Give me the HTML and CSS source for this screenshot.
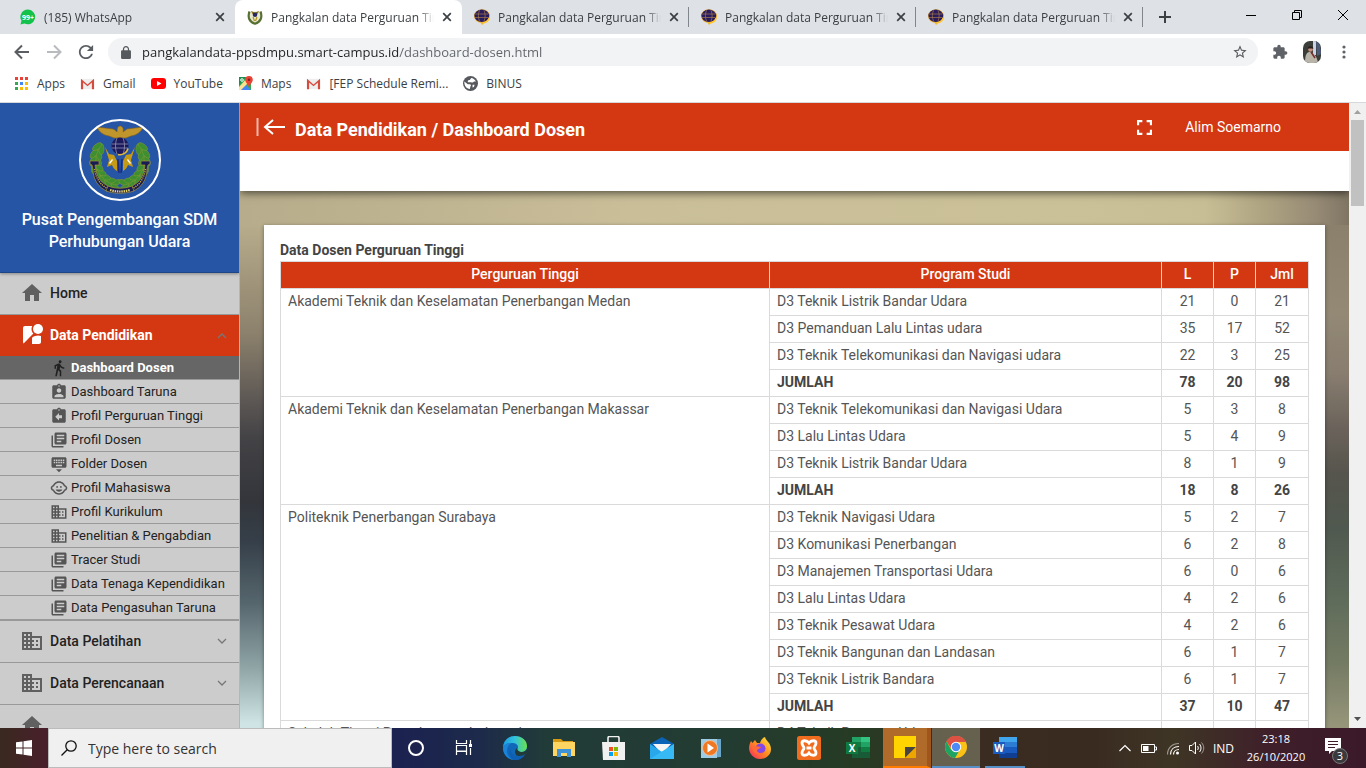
FILE: index.html
```html
<!DOCTYPE html>
<html lang="id">
<head>
<meta charset="utf-8">
<title>Pangkalan data Perguruan Tinggi</title>
<link rel="stylesheet" href="styles.css">
</head>
<body>
<svg class="defs" aria-hidden="true">
  <symbol id="home" viewBox="0 0 24 24"><path d="M10 20v-6h4v6h5v-8h3L12 3 2 12h3v8z"/></symbol>
  <symbol id="street" viewBox="0 0 24 24"><path d="M12.56 14.33c-.34.27-.56.7-.56 1.17V21h7c1.1 0 2-.9 2-2v-5.98c-.94-.33-1.95-.52-3-.52-2.03 0-3.93.7-5.44 1.83z"/><circle cx="18" cy="6" r="5"/><path d="M11.5 6c0-1.08.27-2.1.74-3H5c-1.1 0-2 .9-2 2v14c0 .55.23 1.05.59 1.41l9.82-9.82C12.23 9.42 11.5 7.8 11.5 6z"/></symbol>
  <symbol id="walk" viewBox="0 0 24 24"><path d="M13.5 5.5c1.1 0 2-.9 2-2s-.9-2-2-2-2 .9-2 2 .9 2 2 2zM9.8 8.9L7 23h2.1l1.8-8 2.1 2v6h2v-7.5l-2.1-2 .6-3C14.8 12 16.8 13 19 13v-2c-1.9 0-3.5-1-4.3-2.4l-1-1.6c-.4-.6-1-1-1.7-1-.3 0-.5.1-.8.1L6 8.3V13h2V9.6l1.8-.7"/></symbol>
  <symbol id="badge-user" viewBox="0 0 24 24"><path d="M19 3h-4.18C14.4 1.84 13.3 1 12 1c-1.3 0-2.4.84-2.82 2H5c-1.1 0-2 .9-2 2v14c0 1.1.9 2 2 2h14c1.1 0 2-.9 2-2V5c0-1.1-.9-2-2-2zm-7 0c.55 0 1 .45 1 1s-.45 1-1 1-1-.45-1-1 .45-1 1-1zm0 4c1.66 0 3 1.34 3 3s-1.34 3-3 3-3-1.34-3-3 1.34-3 3-3zm6 12H6v-1.4c0-2 4-3.1 6-3.1s6 1.1 6 3.1V19z"/></symbol>
  <symbol id="badge-return" viewBox="0 0 24 24"><path d="M19 3h-4.18C14.4 1.84 13.3 1 12 1c-1.3 0-2.4.84-2.82 2H5c-1.1 0-2 .9-2 2v14c0 1.1.9 2 2 2h14c1.1 0 2-.9 2-2V5c0-1.1-.9-2-2-2zm-7 0c.55 0 1 .45 1 1s-.45 1-1 1-1-.45-1-1 .45-1 1-1zm4 12h-4v3l-5-5 5-5v3h4v4z"/></symbol>
  <symbol id="books" viewBox="0 0 24 24"><path d="M4 6H2v14c0 1.1.9 2 2 2h14v-2H4V6zm16-4H8c-1.1 0-2 .9-2 2v12c0 1.1.9 2 2 2h12c1.1 0 2-.9 2-2V4c0-1.1-.9-2-2-2zm-1 9H9V9h10v2zm-4 4H9v-2h6v2zm4-8H9V5h10v2z"/></symbol>
  <symbol id="keyboard" viewBox="0 0 24 24"><path d="M20 3H4c-1.1 0-1.99.9-1.99 2L2 15c0 1.1.9 2 2 2h16c1.1 0 2-.9 2-2V5c0-1.1-.9-2-2-2zm-9 3h2v2h-2V6zm0 3h2v2h-2V9zM8 6h2v2H8V6zm0 3h2v2H8V9zm-1 2H5V9h2v2zm0-3H5V6h2v2zm9 7H8v-2h8v2zm0-4h-2V9h2v2zm0-3h-2V6h2v2zm3 3h-2V9h2v2zm0-3h-2V6h2v2zm-7 15l4-4H8l4 4z"/></symbol>
  <symbol id="child" viewBox="0 0 24 24"><circle cx="14.5" cy="10.5" r="1.25"/><circle cx="9.5" cy="10.5" r="1.25"/><path d="M22.94 12.66c.04-.21.06-.43.06-.66s-.02-.45-.06-.66c-.25-1.51-1.36-2.74-2.81-3.17-.53-1.12-1.28-2.1-2.19-2.91C16.36 3.85 14.28 3 12 3s-4.36.85-5.94 2.26c-.92.81-1.67 1.8-2.19 2.91-1.45.43-2.56 1.65-2.81 3.17-.04.21-.06.43-.06.66s.02.45.06.66c.25 1.51 1.36 2.74 2.81 3.17.52 1.11 1.27 2.09 2.17 2.89C7.62 20.14 9.71 21 12 21s4.38-.86 5.97-2.28c.9-.8 1.65-1.79 2.17-2.89 1.44-.43 2.55-1.65 2.8-3.17zM19 14c-.1 0-.19-.02-.29-.03-.2.67-.49 1.29-.86 1.86C16.6 17.74 14.45 19 12 19s-4.6-1.26-5.85-3.17c-.37-.57-.66-1.19-.86-1.86-.1.01-.19.03-.29.03-1.1 0-2-.9-2-2s.9-2 2-2c.1 0 .19.02.29.03.2-.67.49-1.29.86-1.86C7.4 6.26 9.55 5 12 5s4.6 1.26 5.85 3.17c.37.57.66 1.19.86 1.86.1-.01.19-.03.29-.03 1.1 0 2 .9 2 2s-.9 2-2 2zM7.5 14c.76 1.77 2.49 3 4.5 3s3.74-1.23 4.5-3h-9z"/></symbol>
  <symbol id="domain" viewBox="0 0 24 24"><path d="M12 7V3H2v18h20V7H12zM6 19H4v-2h2v2zm0-4H4v-2h2v2zm0-4H4V9h2v2zm0-4H4V5h2v2zm4 12H8v-2h2v2zm0-4H8v-2h2v2zm0-4H8V9h2v2zm0-4H8V5h2v2zm10 12h-8v-2h2v-2h-2v-2h2v-2h-2V9h8v10zm-2-8h-2v2h2v-2zm0 4h-2v2h2v-2z"/></symbol>
  <symbol id="chev-down" viewBox="0 0 10 10"><path d="M1 3l4 4 4-4" fill="none" stroke="currentColor" stroke-width="1.3"/></symbol>
  <symbol id="chev-up" viewBox="0 0 10 10"><path d="M1 8l4-4 4 4" fill="none" stroke="currentColor" stroke-width="1.3"/></symbol>
  <symbol id="close" viewBox="0 0 10 10"><path d="M1.2 1.2l7.6 7.6M8.8 1.2L1.2 8.8" fill="none" stroke="currentColor" stroke-width="1.7"/></symbol>
  <symbol id="globe-fav" viewBox="0 0 16 16"><path d="M0 7C0 3 4 .2 8 .2S16 3 16 7c0 3.500-3 6-5.500 6.500L8 16 6.500 13.800C3 13.500 0 10.500 0 7z" fill="#f2b632"/><ellipse cx="7.800" cy="6.800" rx="7.400" ry="6.200" fill="#2a1c5c"/><path d="M1 5h13.500M1 8.500h13.500M5.500 1.200c-1.500 4-1.500 7 0 11M10 1.200c1.500 4 1.500 7 0 11" fill="none" stroke="#a37a4a" stroke-width=".7"/><path d="M9 14c3-.5 5.500-2.500 6.200-5" fill="none" stroke="#ffc629" stroke-width="1.400"/></symbol>
  <symbol id="gmail" viewBox="0 0 16 16"><path d="M1 3h14v11H1z" fill="#eee"/><path d="M1 14V3l7 6 7-6v11h-2.300V7L8 11 3.300 7v7z" fill="#d54b3d"/></symbol>
</svg>

<header class="browser">
  <div class="tabstrip">
    <div class="tab">
      <svg class="fav" viewBox="0 0 16 16"><path d="M8 .5a7.400 7.400 0 1 1-3.600 14L.5 15.500l1-3.800A7.400 7.400 0 0 1 8 .5z" fill="#12c24b"/><text x="8" y="11" text-anchor="middle" class="fav-count">99+</text></svg>
      <span class="tab-title">(185) WhatsApp</span>
      <button class="tab-close" aria-label="Tutup tab"><svg><use href="#close"/></svg></button>
    </div>
    <div class="tab active">
      <svg class="fav" viewBox="0 0 16 16"><path d="M2.500 2.500C.5 8 2 13 8 14.800 14 13 15.500 8 13.500 2.500" fill="#e7e6cf" stroke="#567033" stroke-width="2.200"/><path d="M4 2l4 1.500L12 2l-1.500 3h-5z" fill="#8d6f1f"/><circle cx="8" cy="5.800" r="2.300" fill="#26295c"/><path d="M6 8l1.500 4M10 8l-1.500 4" stroke="#b3921e" stroke-width="1.200"/></svg>
      <span class="tab-title">Pangkalan data Perguruan Tinggi</span>
      <button class="tab-close" aria-label="Tutup tab"><svg><use href="#close"/></svg></button>
    </div>
    <div class="tab divided">
      <svg class="fav"><use href="#globe-fav"/></svg>
      <span class="tab-title">Pangkalan data Perguruan Tinggi</span>
      <button class="tab-close" aria-label="Tutup tab"><svg><use href="#close"/></svg></button>
    </div>
    <div class="tab divided">
      <svg class="fav"><use href="#globe-fav"/></svg>
      <span class="tab-title">Pangkalan data Perguruan Tinggi</span>
      <button class="tab-close" aria-label="Tutup tab"><svg><use href="#close"/></svg></button>
    </div>
    <div class="tab divided">
      <svg class="fav"><use href="#globe-fav"/></svg>
      <span class="tab-title">Pangkalan data Perguruan Tinggi</span>
      <button class="tab-close" aria-label="Tutup tab"><svg><use href="#close"/></svg></button>
    </div>
    <button class="new-tab" aria-label="Tab baru"><svg viewBox="0 0 12 12"><path d="M6 0v12M0 6h12" stroke="#3c4043" stroke-width="2"/></svg></button>
    <div class="win-buttons">
      <button aria-label="Minimize"><svg viewBox="0 0 10 10"><path d="M0 5.500h10" stroke="#000"/></svg></button>
      <button aria-label="Restore"><svg viewBox="0 0 10 10"><path d="M.5 2.500h7v7h-7zM2.500 2.500v-2h7v7h-2" fill="none" stroke="#000"/></svg></button>
      <button aria-label="Close"><svg viewBox="0 0 10 10"><path d="M0 0l10 10M10 0L0 10" stroke="#000"/></svg></button>
    </div>
  </div>

  <div class="toolbar">
    <div class="nav-buttons">
      <button aria-label="Kembali"><svg viewBox="0 0 16 16"><path d="M15 8H2M8 1.500L1.500 8 8 14.500" fill="none" stroke="#5a5d61" stroke-width="2"/></svg></button>
      <button aria-label="Maju"><svg viewBox="0 0 16 16"><path d="M1 8h13M8 1.500L14.500 8 8 14.500" fill="none" stroke="#b9bbbe" stroke-width="2"/></svg></button>
      <button aria-label="Muat ulang"><svg class="reload" viewBox="3 3 18 18"><path d="M17.650 6.350C16.200 4.900 14.210 4 12 4c-4.420 0-7.990 3.580-7.990 8s3.570 8 7.990 8c3.730 0 6.840-2.550 7.730-6h-2.080c-.82 2.330-3.040 4-5.650 4-3.310 0-6-2.690-6-6s2.690-6 6-6c1.660 0 3.140.69 4.220 1.780L13 11h7V4l-2.350 2.350z" fill="#5a5d61"/></svg></button>
    </div>
    <div class="omnibox">
      <svg class="lock" viewBox="4 1 16 21"><path d="M18 8h-1V6c0-2.760-2.240-5-5-5S7 3.240 7 6v2H6c-1.100 0-2 .9-2 2v10c0 1.100.9 2 2 2h12c1.100 0 2-.9 2-2V10c0-1.100-.9-2-2-2zM9 8V6c0-1.660 1.340-3 3-3s3 1.340 3 3v2H9z" fill="#55585c"/></svg>
      <input type="text" aria-label="Alamat" value="pangkalandata-ppsdmpu.smart-campus.id/dashboard-dosen.html">
      <button aria-label="Tandai halaman"><svg viewBox="0 0 24 24"><path d="M22 9.240l-7.190-.62L12 2 9.190 8.630 2 9.240l5.460 4.730L5.820 21 12 17.270 18.180 21l-1.630-7.030L22 9.240zM12 15.400l-3.760 2.270 1-4.280-3.320-2.880 4.380-.38L12 6.100l1.710 4.040 4.380.38-3.320 2.880 1 4.280L12 15.400z" fill="#55585c"/></svg></button>
    </div>
    <div class="tools">
      <button aria-label="Ekstensi"><svg viewBox="0 0 24 24"><path d="M20.500 11H19V7c0-1.100-.9-2-2-2h-4V3.500C13 2.120 11.880 1 10.500 1S8 2.120 8 3.500V5H4c-1.100 0-1.990.9-1.990 2v3.800H3.500c1.490 0 2.700 1.210 2.700 2.700s-1.210 2.700-2.700 2.700H2V20c0 1.100.9 2 2 2h3.800v-1.500c0-1.490 1.210-2.700 2.700-2.700 1.490 0 2.700 1.210 2.700 2.700V22H17c1.100 0 2-.9 2-2v-4h1.500c1.380 0 2.500-1.120 2.500-2.500S21.880 11 20.500 11z" fill="#5f6368"/></svg></button>
      <button aria-label="Profil"><svg class="avatar" viewBox="0 0 18 22"><defs><clipPath id="round"><rect width="18" height="22" rx="7"/></clipPath></defs><g clip-path="url(#round)"><rect width="18" height="22" fill="#3a3d38"/><path d="M10 0h3v14h-3z" fill="#c9d3e6"/><path d="M13 0c4 1 5 8 5 13l-4 2z" fill="#4d5a78"/><path d="M2 22c0-9 2-11 5-11s7 4 8 11z" fill="#b9b4a8"/><circle cx="7.500" cy="8.500" r="2.300" fill="#c98f7d"/><path d="M4.500 7.500c1-3 5-3 6 0z" fill="#2a1d1b"/><path d="M8 11l4 6" stroke="#7a2d2d" stroke-width="1.500"/></g></svg></button>
      <button aria-label="Menu"><svg viewBox="0 0 16 16"><g fill="#5f6368"><circle cx="8" cy="3" r="1.600"/><circle cx="8" cy="8" r="1.600"/><circle cx="8" cy="13" r="1.600"/></g></svg></button>
    </div>
  </div>

  <nav class="bookmarks" aria-label="Bookmark">
    <a href="#"><svg viewBox="0 0 15 15"><path d="M1 1h3v3H1zM6 1h3v3H6zM11 1h3v3h-3z" fill="#ea4335"/><path d="M1 6h3v3H1z" fill="#34a853"/><path d="M6 6h3v3H6z" fill="#4285f4"/><path d="M11 6h3v3h-3zM6 11h3v3H6zM11 11h3v3h-3z" fill="#fbbc05"/><path d="M1 11h3v3H1z" fill="#34a853"/></svg>Apps</a>
    <a href="#"><svg><use href="#gmail"/></svg>Gmail</a>
    <a href="#"><svg viewBox="0 0 15 15"><rect y="2" width="15" height="11" rx="3" fill="#f00"/><path d="M6 5l4.500 2.500L6 10z" fill="#fff"/></svg>YouTube</a>
    <a href="#"><svg viewBox="0 0 15 15"><path d="M1 1h9l3 5v8H1z" fill="#34a853"/><path d="M1 14l6-6 6 6z" fill="#4285f4"/><path d="M1 11l8-9 3 3-9 9H1z" fill="#fde293"/><path d="M1 1h7L1 9z" fill="#1e8e4e"/><circle cx="4" cy="4" r="1.300" fill="none" stroke="#fff"/><path d="M11 0a3.800 3.800 0 0 1 3.800 3.800C14.800 6.500 12 8 11 11 10 8 7.200 6.500 7.200 3.800A3.800 3.800 0 0 1 11 0z" fill="#ea4335"/><circle cx="11" cy="3.800" r="1.300" fill="#8c1d18"/></svg>Maps</a>
    <a href="#"><svg><use href="#gmail"/></svg>[FEP Schedule Remi...</a>
    <a href="#"><svg viewBox="1 1 22 22"><circle cx="12" cy="12" r="11" fill="#55585c"/><path d="M3 9l5 4h3c2 0 2 2 1 3l-1 4C6 20 3 15 3 11zM8 9c0-2 2-2 3-2l2-3c3 0 5 2 7 5h-3c-1 2-3 2-4 1H8zM15 14h3l-1 3-2 1z" fill="#fff"/></svg>BINUS</a>
  </nav>
</header>

<div class="viewport">
  <aside class="sidebar">
    <div class="brand">
      <svg class="emblem" viewBox="0 0 82 82">
        <defs>
          <g id="leaf"><ellipse cx="40" cy="64" rx="2.600" ry="5.500" transform="rotate(62 40 64)"/><ellipse cx="40" cy="69" rx="2.600" ry="5.500" transform="rotate(112 40 69)"/></g>
          <g id="branch" fill="#3d8f2f" stroke="#8f9a35" stroke-width=".5">
            <use href="#leaf" transform="rotate(8 41 42)"/><use href="#leaf" transform="rotate(24 41 42)"/><use href="#leaf" transform="rotate(40 41 42)"/><use href="#leaf" transform="rotate(56 41 42)"/><use href="#leaf" transform="rotate(72 41 42)"/><use href="#leaf" transform="rotate(88 41 42)"/><use href="#leaf" transform="rotate(104 41 42)"/><use href="#leaf" transform="rotate(120 41 42)"/>
          </g>
          <g id="ribbon"><path d="M11 42h9v4h-4l1 6c2 8 6 12 12 15l-1 5C20 69 14 61 14 50l-1-4-2-1z" fill="#191b54" stroke="#a89439" stroke-width=".7"/><path d="M15.500 50c1 8 5 15 12 19" fill="none" stroke="#c4ab38" stroke-width="1.400" stroke-dasharray="1.200 1"/></g>
          <path id="torch" d="M26 28l4 7 5 1 3 6v10c-2-1-4-3-5-6l-5 2 2-7z" fill="#c49a17"/>
        </defs>
        <use href="#branch"/><use href="#branch" transform="matrix(-1 0 0 1 82 0)"/>
        <use href="#ribbon"/><use href="#ribbon" transform="matrix(-1 0 0 1 82 0)"/>
        <use href="#torch"/><use href="#torch" transform="matrix(-1 0 0 1 82 0)"/>
        <path d="M30 44l3-4 1 1-3 4zM52 44l-3-4-1 1 3 4z" fill="#fff"/>
        <path d="M39 40l1 14M43 40l-1 14" stroke="#1d2a80" stroke-width="1.500"/>
        <path d="M29 67c8 3 16 3 24 0l2 5c-9 3-19 3-28 0z" fill="#191b54" stroke="#a89439" stroke-width=".7"/>
        <path d="M31 71c7 2 13 2 20 0" fill="none" stroke="#e0cf6a" stroke-width="2.200" stroke-dasharray="1.500 .8"/>
        <path d="M18 8l16 2c2 1 3 2 4 3 0-4 1-6 3-6s4 2 3 6c1-1 3-2 4-3l16-2c-2 5-6 8-12 9l-5 2H35l-5-2c-6-1-10-4-12-9z" fill="#c0952b" stroke="#806018" stroke-width=".6"/>
        <circle cx="41" cy="27" r="8.500" fill="#1c1a5c"/><path d="M33 25h16M33 29h16M38 19c-2 5-2 11 0 16M44 19c2 5 2 11 0 16" fill="none" stroke="#9093b0" stroke-width=".8"/><path d="M39 35.500c5 1 9-2 10-6" fill="none" stroke="#e3b93a" stroke-width="1.600"/>
        <circle cx="41" cy="41" r="40" fill="none" stroke="#fff" stroke-width="2"/>
      </svg>
      <h1>Pusat Pengembangan SDM Perhubungan Udara</h1>
    </div>
    <nav aria-label="Menu utama">
      <ul class="menu">
        <li><a class="item" href="#"><svg><use href="#home"/></svg><span>Home</span></a></li>
        <li>
          <a class="item open" href="#"><svg><use href="#street"/></svg><span>Data Pendidikan</span><svg class="chev"><use href="#chev-up"/></svg></a>
          <ul class="submenu">
            <li><a class="current" href="#"><svg><use href="#walk"/></svg>Dashboard Dosen</a></li>
            <li><a href="#"><svg><use href="#badge-user"/></svg>Dashboard Taruna</a></li>
            <li><a href="#"><svg><use href="#badge-return"/></svg>Profil Perguruan Tinggi</a></li>
            <li><a href="#"><svg><use href="#books"/></svg>Profil Dosen</a></li>
            <li><a href="#"><svg><use href="#keyboard"/></svg>Folder Dosen</a></li>
            <li><a href="#"><svg><use href="#child"/></svg>Profil Mahasiswa</a></li>
            <li><a href="#"><svg><use href="#domain"/></svg>Profil Kurikulum</a></li>
            <li><a href="#"><svg><use href="#domain"/></svg>Penelitian &amp; Pengabdian</a></li>
            <li><a href="#"><svg><use href="#books"/></svg>Tracer Studi</a></li>
            <li><a href="#"><svg><use href="#books"/></svg>Data Tenaga Kependidikan</a></li>
            <li><a href="#"><svg><use href="#books"/></svg>Data Pengasuhan Taruna</a></li>
          </ul>
        </li>
        <li><a class="item" href="#"><svg><use href="#domain"/></svg><span>Data Pelatihan</span><svg class="chev"><use href="#chev-down"/></svg></a></li>
        <li><a class="item" href="#"><svg><use href="#domain"/></svg><span>Data Perencanaan</span><svg class="chev"><use href="#chev-down"/></svg></a></li>
        <li><a class="item" href="#" aria-label="Beranda"><svg><use href="#home"/></svg></a></li>
      </ul>
    </nav>
  </aside>

  <main class="content">
    <div class="appbar">
      <button class="collapse" aria-label="Ciutkan menu"><svg viewBox="0 0 30 20"><path d="M1.500 1v18" stroke="#fff" stroke-opacity=".65" stroke-width="2"/><path d="M29 10H9M17 3l-8 7 8 7" fill="none" stroke="#fff" stroke-width="2"/></svg></button>
      <h2>Data Pendidikan / Dashboard Dosen</h2>
      <button class="fullscreen" aria-label="Layar penuh"><svg viewBox="5 5 14 14"><path d="M7 14H5v5h5v-2H7v-3zm-2-4h2V7h3V5H5v5zm12 7h-3v2h5v-5h-2v3zM14 5v2h3v3h2V5h-5z" fill="#fff"/></svg></button>
      <a class="user" href="#">Alim Soemarno</a>
    </div>
    <div class="subbar"></div>
    <section class="card">
      <table>
        <caption>Data Dosen Perguruan Tinggi</caption>
        <colgroup><col class="c-school"><col class="c-program"><col class="c-l"><col class="c-p"><col class="c-total"></colgroup>
        <thead><tr><th>Perguruan Tinggi</th><th>Program Studi</th><th>L</th><th>P</th><th>Jml</th></tr></thead>
        <tbody>
          <tr><td rowspan="4">Akademi Teknik dan Keselamatan Penerbangan Medan</td><td>D3 Teknik Listrik Bandar Udara</td><td>21</td><td>0</td><td>21</td></tr>
          <tr><td>D3 Pemanduan Lalu Lintas udara</td><td>35</td><td>17</td><td>52</td></tr>
          <tr><td>D3 Teknik Telekomunikasi dan Navigasi udara</td><td>22</td><td>3</td><td>25</td></tr>
          <tr class="sum"><td>JUMLAH</td><td>78</td><td>20</td><td>98</td></tr>
        </tbody>
        <tbody>
          <tr><td rowspan="4">Akademi Teknik dan Keselamatan Penerbangan Makassar</td><td>D3 Teknik Telekomunikasi dan Navigasi Udara</td><td>5</td><td>3</td><td>8</td></tr>
          <tr><td>D3 Lalu Lintas Udara</td><td>5</td><td>4</td><td>9</td></tr>
          <tr><td>D3 Teknik Listrik Bandar Udara</td><td>8</td><td>1</td><td>9</td></tr>
          <tr class="sum"><td>JUMLAH</td><td>18</td><td>8</td><td>26</td></tr>
        </tbody>
        <tbody>
          <tr><td rowspan="8">Politeknik Penerbangan Surabaya</td><td>D3 Teknik Navigasi Udara</td><td>5</td><td>2</td><td>7</td></tr>
          <tr><td>D3 Komunikasi Penerbangan</td><td>6</td><td>2</td><td>8</td></tr>
          <tr><td>D3 Manajemen Transportasi Udara</td><td>6</td><td>0</td><td>6</td></tr>
          <tr><td>D3 Lalu Lintas Udara</td><td>4</td><td>2</td><td>6</td></tr>
          <tr><td>D3 Teknik Pesawat Udara</td><td>4</td><td>2</td><td>6</td></tr>
          <tr><td>D3 Teknik Bangunan dan Landasan</td><td>6</td><td>1</td><td>7</td></tr>
          <tr><td>D3 Teknik Listrik Bandara</td><td>6</td><td>1</td><td>7</td></tr>
          <tr class="sum"><td>JUMLAH</td><td>37</td><td>10</td><td>47</td></tr>
        </tbody>
        <tbody>
          <tr><td>Sekolah Tinggi Penerbangan Indonesia</td><td>D4 Teknik Pesawat Udara</td><td></td><td></td><td></td></tr>
        </tbody>
      </table>
    </section>
  </main>

  <div class="scrollbar" aria-hidden="true">
    <svg viewBox="0 0 17 17"><path d="M5 11l3.500-4 3.500 4z" fill="#a0a0a0"/></svg>
    <div class="track"><div class="thumb"></div></div>
    <svg viewBox="0 0 17 17"><path d="M5 6l3.500 4L12 6z" fill="#505050"/></svg>
  </div>
</div>

<footer class="taskbar">
  <button class="start" aria-label="Start"><svg viewBox="0 0 16 16"><path d="M0 2.300l6.500-.9v6.100H0zM7.500 1.200L16 0v7.500H7.500zM0 8.500h6.500v6.100L0 13.700zM7.500 8.500H16V16l-8.500-1.200z" fill="#fff"/></svg></button>
  <label class="search">
    <svg viewBox="0 0 16 16"><circle cx="10" cy="6" r="5.200" fill="none" stroke="#111" stroke-width="1.300"/><path d="M6.200 9.800L.5 15.500" stroke="#111" stroke-width="1.300"/></svg>
    <input type="text" placeholder="Type here to search" aria-label="Type here to search">
  </label>
  <div class="shell">
    <button aria-label="Cortana"><svg viewBox="0 0 24 24"><circle cx="12" cy="12" r="7" fill="none" stroke="#fff" stroke-width="2"/></svg></button>
    <button aria-label="Task view"><svg viewBox="0 0 24 24"><path d="M4.500 4v3.500h10V4M4.500 19v-3.500h10V19M4.500 9.500h10v5.500h-10zM18.500 4v4M18.500 12v7" fill="none" stroke="#fff" stroke-width="1.200"/><path d="M17 8h3v3h-3z" fill="#fff"/></svg></button>
  </div>
  <div class="apps">
    <button aria-label="Microsoft Edge"><svg viewBox="0 0 24 24"><defs><linearGradient id="edge-a" x1="0" x2="1"><stop stop-color="#1c9ce0"/><stop offset=".5" stop-color="#33c3dc"/><stop offset="1" stop-color="#6be04a"/></linearGradient></defs><circle cx="12" cy="12" r="12" fill="#1268b8"/><path d="M0 12C0 5 5 0 12 0s12 4.500 12 10c0 4-3 6-6 6-2.500 0-4-.8-4-2 0-.8 1-1 1-3 0-2.500-2.500-4-6-4-5 0-8 2-9 5z" fill="url(#edge-a)"/><path d="M0 12c1-4 5-5 8-5-2 1.500-4 4-4 8 0 4 3 8 7 9C4.500 23.500 0 18 0 12z" fill="#1b84d8"/><path d="M24 13v6l-3 1c-4 2-9 0-9-4 0-2 1-3 2-4 0 2 2 4 5 4 2 0 4-1 5-3z" fill="#203b3a"/><path d="M8 12c-1 5 3 8 8 8 2.500 0 4.500-.8 6-2-2 4-6 6-10 6-5 0-7-8-4-12z" fill="#0d5fb4"/></svg></button>
    <button aria-label="File Explorer"><svg viewBox="0 0 24 24"><path d="M1 3h8l2 2h10v4H1z" fill="#d99a13"/><path d="M1 6h22v14H1z" fill="#ffd562"/><path d="M5 13h14v8h-4v-4h-6v4H5z" fill="#3e92d8"/></svg></button>
    <button aria-label="Microsoft Store"><svg viewBox="0 0 24 24"><path d="M7 8V2c0-1 .5-1.500 1.500-1.500h8c1 0 1.500.5 1.500 1.500v6" fill="none" stroke="#f1f1f1" stroke-width="1.600"/><path d="M1 6h23v18H2z" fill="#f1f1f1"/><path d="M8 11h4v4H8z" fill="#f25022"/><path d="M13 11h4v4h-4z" fill="#7fba00"/><path d="M8 16h4v4H8z" fill="#00a4ef"/><path d="M13 16h4v4h-4z" fill="#ffb900"/></svg></button>
    <button aria-label="Mail"><svg viewBox="0 0 24 24"><path d="M0 8l12-7 12 7v6H0z" fill="#0b63b8"/><path d="M3 8h18l-9 10z" fill="#f5f5f5"/><path d="M0 8l12 8L24 8v15H0z" fill="#28a8ea"/><path d="M0 23l24-15v15z" fill="#36b9f5"/></svg></button>
    <button aria-label="Media Player"><svg viewBox="0 0 24 24"><path d="M8 3h14v18l-14 1z" fill="#6ba6c9"/><path d="M2 3h16v19H2z" fill="#9ccce6"/><circle cx="11" cy="12" r="7.500" fill="#f07822" stroke="#f6c49a" stroke-width=".8"/><path d="M8.500 7.500L15 12l-6.500 4.500z" fill="#fff"/></svg></button>
    <button aria-label="Firefox"><svg viewBox="0 0 24 24"><defs><linearGradient id="fox" x1="1" x2="0" y2="1"><stop stop-color="#ffea3b"/><stop offset=".5" stop-color="#ff8a20"/><stop offset="1" stop-color="#f5206a"/></linearGradient></defs><path d="M1 12c0-3 1-5 2-7l1.500 2L7 4l2 3h3c1-3 2-5 5-6 1 4 6 6 6 12 0 6-5 10-11 10S1 18 1 12z" fill="url(#fox)"/><circle cx="12.500" cy="12.500" r="5" fill="#8447e8"/><path d="M4 11c3-2 6 0 9 0-1 2-4 2-4 4 1 2 4 3 7 1-1 4-11 4-12-5z" fill="#ff6a35"/></svg></button>
    <button aria-label="XAMPP"><svg viewBox="0 0 24 24"><rect width="24" height="24" rx="2.500" fill="#f06c1f"/><path d="M5 7c0-3 5-3 7 0 2-3 7-3 7 0 0 3-2 3-2 5s2 2 2 5-5 3-7 0c-2 3-7 3-7 0 0-3 2-3 2-5s-2-2-2-5zM9.500 12h5" fill="none" stroke="#fff" stroke-width="2.800"/></svg></button>
    <button aria-label="Excel"><svg viewBox="0 0 24 24"><path d="M6 1h18v21H6z" fill="#21a366"/><path d="M15 1h9v5h-9z" fill="#33c481"/><path d="M6 6h9v5H6z" fill="#107c41"/><path d="M6 11h18v11H6z" fill="#185c37"/><path d="M15 11h9v5h-9z" fill="#107c41"/><path d="M0 6h12v12H0z" fill="#0f7a40"/><text x="6" y="15.500" text-anchor="middle" class="app-letter">X</text></svg></button>
    <button class="sticky" aria-label="Sticky Notes"><svg viewBox="0 0 24 24"><path d="M1 1h22v11l-11 11H1z" fill="#ffd400"/><path d="M12 12h11L12 23z" fill="#474340"/><path d="M23 12v11H12z" fill="#eda500"/></svg></button>
    <button class="running" aria-label="Chrome"><svg viewBox="0 0 24 24"><circle cx="12" cy="12" r="11" fill="#fbc116"/><path d="M12 12L2.500 6.500A11 11 0 0 1 21.500 6.500H12z" fill="#dd5144"/><path d="M2.500 6.500A11 11 0 0 0 11 23l5-8.500L7 14.500z" fill="#1da462"/><path d="M12 7h9.800A11 11 0 0 0 2.500 6.500L7.500 14z" fill="#dd5144"/><circle cx="12" cy="12" r="5.200" fill="#fff"/><circle cx="12" cy="12" r="4.200" fill="#4c8bf5"/></svg></button>
    <button class="opened" aria-label="Word"><svg viewBox="0 0 24 24"><path d="M6 1h18v21H6z" fill="#2b7cd3"/><path d="M6 1h18v5H6z" fill="#41a5ee"/><path d="M6 11h18v6H6z" fill="#185abd"/><path d="M6 17h18v5H6z" fill="#103f91"/><path d="M0 6h12v12H0z" fill="#1a5bbf"/><text x="6" y="15.500" text-anchor="middle" class="app-letter">W</text></svg></button>
  </div>
  <div class="tray">
    <button aria-label="Ikon tersembunyi"><svg viewBox="0 0 16 16"><path d="M2.500 11L8 5.500 13.500 11" fill="none" stroke="#fff" stroke-width="1.200"/></svg></button>
    <svg viewBox="0 0 16 16"><path d="M.5 4.500h13v8H.5zM14 7h1.500v3H14" fill="none" stroke="#fff"/><path d="M2 6h5.500v5H2z" fill="#fff"/></svg>
    <svg viewBox="0 0 16 16"><g fill="none" stroke="#fff" stroke-width="1.200"><path d="M2.500 14.500C2.500 8 7 3.500 14 3.500" opacity=".5"/><path d="M5.500 14.500c0-5 3.500-8 8.500-8M8.500 14.500c0-3 2.500-5 5.500-5"/></g><circle cx="12.500" cy="13" r="1.500" fill="#fff"/></svg>
    <svg viewBox="0 0 16 16"><g fill="none" stroke="#fff"><path d="M.5 5.500h2.500L6.500 2v12L3 10.500H.5zM8.500 6c1 1 1 3 0 4M10.500 4c2 2.500 2 5.500 0 8"/><path d="M12.500 2.500c3 3.500 3 7.500 0 11" opacity=".5"/></g></svg>
    <span class="lang">IND</span>
    <time class="clock" datetime="2020-10-26T23:18">23:18<br>26/10/2020</time>
    <button class="notify" aria-label="Notifikasi"><svg viewBox="0 0 24 24"><path d="M1 2h16v13H8l-3 3v-3H1z" fill="#fff"/><path d="M4 5.500h10M4 8.500h10M4 11.500h7" stroke="#3d1b27" stroke-width="1.200"/></svg><span class="count">3</span></button>
  </div>
</footer>
</body>
</html>
```
FILE: styles.css
```css
* { box-sizing: border-box; }

body {
  margin: 0;
  height: 100vh;
  display: flex;
  flex-direction: column;
  overflow: hidden;
  font-family: Roboto, "Liberation Sans", sans-serif;
  font-size: 14px;
  color: #444;
}

button {
  border: 0;
  padding: 0;
  background: none;
  display: flex;
  align-items: center;
  justify-content: center;
  font: inherit;
  color: inherit;
}

input { border: 0; padding: 0; background: none; outline: 0; font: inherit; min-width: 0; }
a { color: inherit; text-decoration: none; }
ul { list-style: none; margin: 0; padding: 0; }
svg { flex: none; fill: currentColor; }
.defs { position: absolute; width: 0; height: 0; }

/* Browser chrome */
.browser { flex: none; font-family: "Open Sans", "Noto Sans", sans-serif; font-size: 12px; color: #3c4043; }
.tabstrip { display: flex; height: 34px; padding-left: 8px; background: #dee1e6; }
.tab {
  width: 227px;
  display: flex;
  align-items: center;
  gap: 8px;
  padding: 0 10px 0 12px;
}
.tab.active { background: #fff; border-radius: 8px 8px 0 0; }
.tab.divided {
  background: linear-gradient(#80868b, #80868b) right center / 1px 20px no-repeat;
}
.fav { width: 16px; height: 16px; }
.fav-count { font: bold 7px "Open Sans", sans-serif; fill: #fff; }
.tab-title {
  flex: 1;
  overflow: hidden;
  white-space: nowrap;
  mask-image: linear-gradient(90deg, #000 calc(100% - 16px), transparent);
}
.tab-close { width: 10px; height: 10px; color: #3c4043; }
.tab-close svg { width: 10px; height: 10px; }
.new-tab { width: 44px; }
.new-tab svg { width: 12px; height: 12px; }
.win-buttons { display: flex; margin-left: auto; height: 29px; }
.win-buttons button { width: 46px; }
.win-buttons svg { width: 10px; height: 10px; }

.toolbar { display: flex; align-items: center; height: 36px; background: #fff; }
.nav-buttons { display: flex; padding: 0 6px; }
.nav-buttons button { width: 32px; }
.nav-buttons svg { width: 16px; height: 16px; }
.omnibox {
  flex: 1;
  display: flex;
  align-items: center;
  gap: 11px;
  height: 28px;
  padding: 0 10px 0 13px;
  border-radius: 14px;
  background: #f1f3f4;
}
.omnibox .lock { width: 10px; height: 13px; }
.omnibox input {
  flex: 1;
  font-size: 13px;
  color: transparent;
  background: linear-gradient(90deg, #202124 256px, #5f6368 256px);
  -webkit-background-clip: text;
  background-clip: text;
}
.omnibox button svg { width: 16px; height: 16px; }
.tools { display: flex; padding: 0 6px; }
.tools button { width: 32px; }
.tools svg { width: 16px; height: 16px; }
.tools .avatar { width: 18px; height: 22px; }

.bookmarks {
  display: flex;
  align-items: center;
  gap: 15px;
  height: 33px;
  padding: 0 14px 5px;
  background: #fff;
  border-bottom: 1px solid #d6d8db;
}
.bookmarks a { display: flex; align-items: center; gap: 8px; }
.bookmarks svg { width: 15px; height: 15px; }

/* Page */
.viewport { flex: 1; min-height: 0; display: flex; overflow: hidden; }

.sidebar { flex: none; width: 240px; background: #ccc; border-right: 1px solid #b5b5b5; }
.brand {
  padding: 16px 16px 19px;
  background: #2655a5;
  border-bottom: 1px solid #1d4587;
  box-shadow: 0 1px 3px rgba(0, 0, 0, .35);
  text-align: center;
}
.emblem { display: block; width: 82px; height: 82px; margin: 0 auto 8px; }
.brand h1 { margin: 0; font-size: 16px; line-height: 22px; font-weight: 500; color: #fff; }

.menu > li { border-bottom: 1px solid #999; }
.item {
  display: flex;
  align-items: center;
  height: 41px;
  padding: 0 12px 2px 20px;
  gap: 6px;
  color: #606060;
}
.item > svg { width: 24px; height: 24px; }
.item > span { flex: 1; font-weight: 500; color: #222; }
.item > .chev { width: 10px; height: 10px; color: #777; }
.item.open { background: #d33813; color: #fff; }
.item.open > span { color: #fff; font-weight: 700; }
.submenu a {
  display: flex;
  align-items: center;
  gap: 3px;
  height: 24px;
  padding-left: 50px;
  border-bottom: 1px solid #999;
  font-size: 13px;
  color: #222;
}
.submenu svg { width: 18px; height: 18px; fill: #555; }
.submenu .current { background: #666; color: #fff; font-weight: 700; }
.submenu .current svg { fill: #222; }

.content {
  flex: 1;
  min-width: 0;
  overflow: hidden;
  background:
    linear-gradient(90deg, #b7ac8b, #c9be98 35%, #cbc198 75%, #c8be95 87%, #aba07f 93%, #978b76 97%, #7f7563) 0 0 / 100% 122px no-repeat,
    linear-gradient(#b7ac8b 122px, #8c816c 230px, #5b5653 300px, #434245 335px, #33353b 400px, #36404a 440px, #56666d 500px, #8fa5a6 565px, #cfe4e4 620px) 0 0 / 50% 100% no-repeat,
    linear-gradient(#8b806c 122px, #938975 210px, #887d6f 270px, #6b635b 325px, #56554d 370px, #50594f 425px, #5d6a5a 490px, #747b63 560px, #96957a 622px) 100% 0 / 50% 100% no-repeat;
}
.appbar {
  position: relative;
  display: flex;
  align-items: center;
  height: 48px;
  padding: 0 68px 0 16px;
  background: #d33813;
  color: #fff;
}
.collapse svg { width: 30px; height: 20px; }
.appbar h2 { flex: 1; margin: 6px 0 0 9px; font-size: 18px; line-height: 24px; font-weight: 700; }
.fullscreen svg { width: 15px; height: 15px; }
.user { margin-left: 33px; }
.subbar { height: 40px; background: #fff; box-shadow: 0 2px 8px rgba(0, 0, 0, .6); }

.card {
  margin: 34px 24px 0;
  padding: 16px;
  background: #fff;
  box-shadow: 0 1px 4px rgba(0, 0, 0, .4);
}
table { width: 100%; table-layout: fixed; border-collapse: collapse; }
caption { text-align: left; font-weight: 700; line-height: 18px; padding-bottom: 2px; }
.c-program { width: 392px; }
.c-l { width: 52px; }
.c-p { width: 42px; }
.c-total { width: 53px; }
th, td { height: 27px; padding: 2px 7px 4px; line-height: 20px; border: 1px solid #dadada; }
th { background: #d33813; color: #fff; font-weight: 500; }
td { vertical-align: top; text-align: center; color: #555; }
td:first-child, td[rowspan] + td { text-align: left; }
tbody td:nth-last-child(4) { text-align: left; }
.sum td { font-weight: 700; color: #444; }

.scrollbar { flex: none; width: 17px; display: flex; flex-direction: column; background: #f0f0f0; }
.scrollbar svg { width: 17px; height: 17px; }
.track { flex: 1; padding: 0 2px; }
.thumb { height: 86px; background: #c1c1c1; }

/* Taskbar */
.taskbar {
  flex: none;
  display: flex;
  height: 40px;
  font-family: "Open Sans", "Noto Sans", sans-serif;
  color: #fff;
  background: linear-gradient(90deg, #39291f, #4a1f2c 48px, #1b2150 390px, #1d2a4b 35%, #213b38 40%, #233c32 53%, #273b23 63%, #3b2c22 72%, #3a2b21 80%, #3e3525 86%, #3f1f2a 93%, #3b1929);
}
.start { width: 48px; }
.start svg { width: 16px; height: 16px; }
.search {
  width: 344px;
  display: flex;
  align-items: center;
  gap: 11px;
  padding: 0 12px;
  background: #f0f0f0;
  border: 1px solid #bbb;
}
.search svg { width: 16px; height: 16px; }
.search input { flex: 1; font-size: 14px; }
.search input::placeholder { color: #333; opacity: 1; }
.shell { display: flex; margin-right: 3px; }
.shell button, .apps button { width: 48px; }
.shell svg, .apps svg { width: 24px; height: 24px; }
.apps { display: flex; gap: 1px; }
.apps .sticky { background: #b06a2a; border-bottom: 2px solid #ff7b00; border-right: 4px solid #a0561b; }
.apps .running { background: #66604f; border-bottom: 2px solid #5790c8; }
.apps .opened { background: linear-gradient(#5790c8, #5790c8) center bottom / 40px 2px no-repeat; }
.app-letter { font: bold 10px "Open Sans", sans-serif; fill: #fff; }
.tray { display: flex; align-items: center; gap: 8px; margin-left: auto; padding-right: 18px; font-size: 12px; }
.tray svg { width: 16px; height: 16px; }
.clock { width: 68px; text-align: center; font-size: 11px; line-height: 18px; }
.tray .notify { position: relative; width: 24px; height: 24px; margin-left: 6px; }
.tray .notify svg { width: 24px; height: 24px; }
.count {
  position: absolute;
  right: 0;
  bottom: -4px;
  width: 16px;
  height: 16px;
  border-radius: 50%;
  background: #3a3a3c;
  border: 1px solid #777;
  font-size: 11px;
  line-height: 14px;
  text-align: center;
}
```
